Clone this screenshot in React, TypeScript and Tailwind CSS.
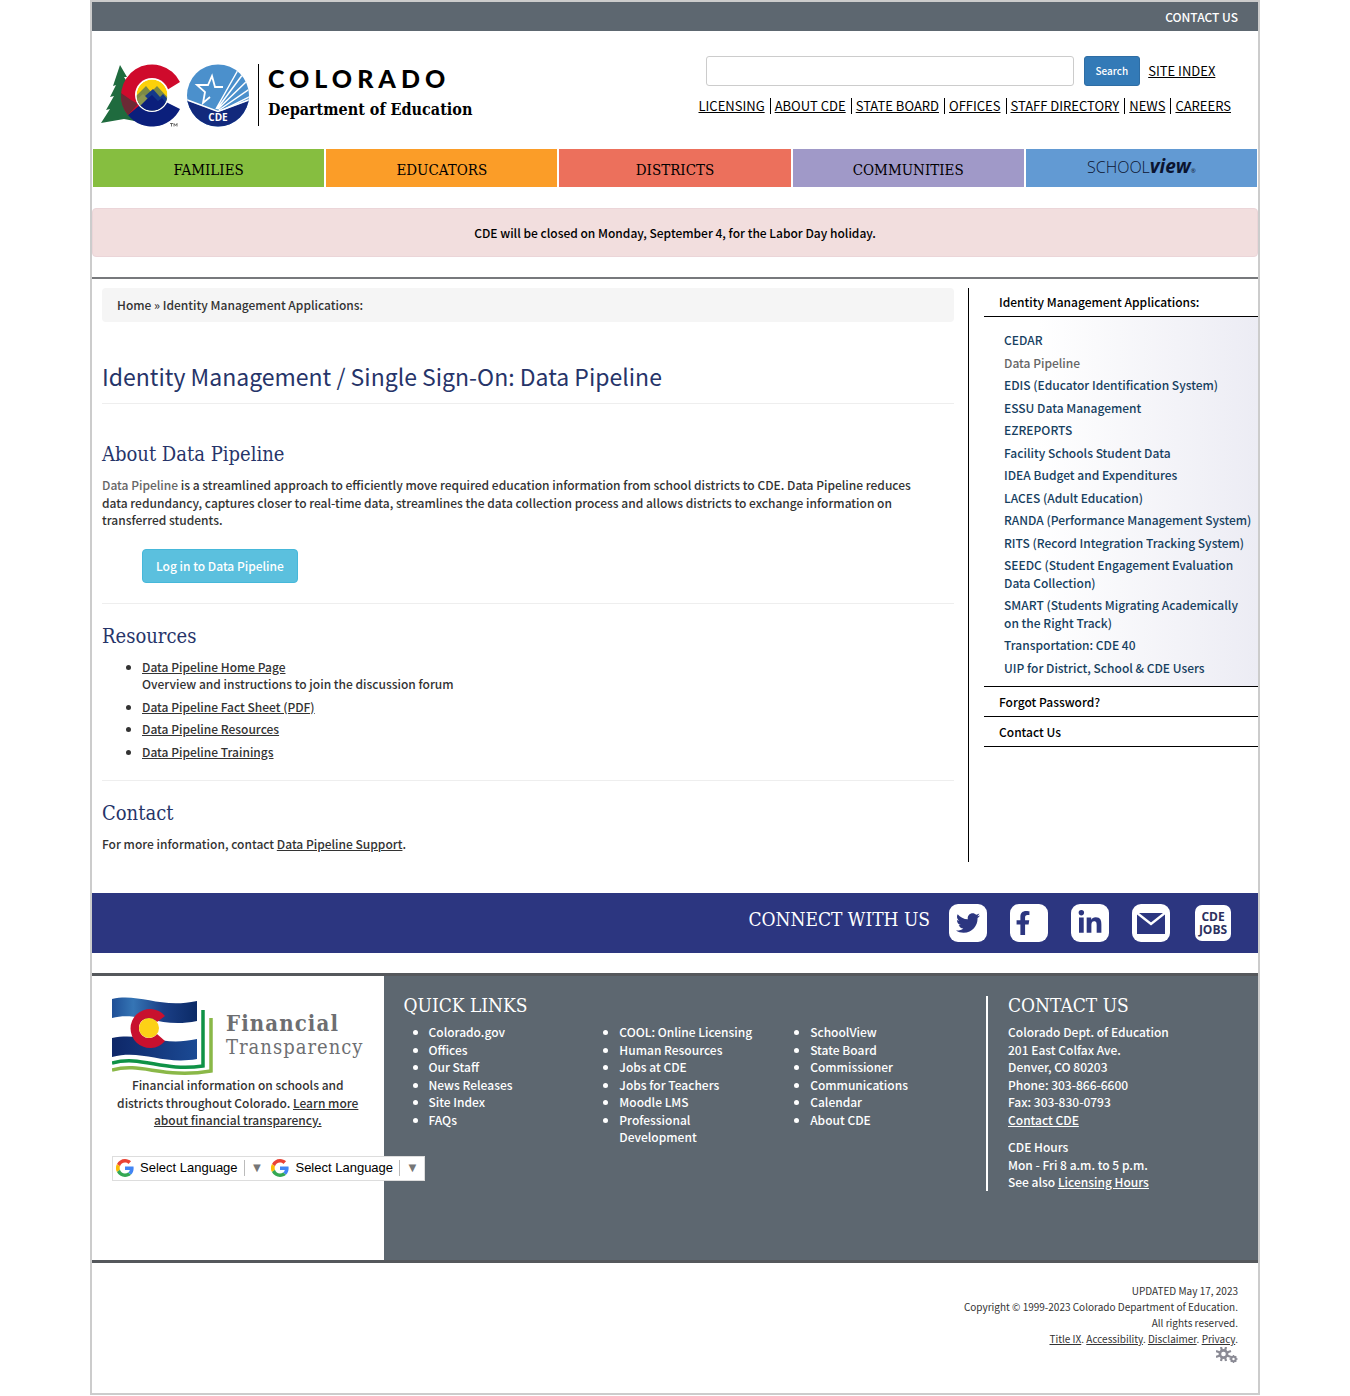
import React from "react";
import { FaFacebookF, FaLinkedinIn, FaTwitter } from "react-icons/fa";

const slab = "font-['DejaVu_Serif_Condensed','DejaVu_Serif',serif] font-normal";
const slabBold = "font-['DejaVu_Serif_Condensed','DejaVu_Serif',serif] font-bold";

const topLinks = ["LICENSING", "ABOUT CDE", "STATE BOARD", "OFFICES", "STAFF DIRECTORY", "NEWS", "CAREERS"];

const tabs = [
  { label: "FAMILIES", color: "bg-[#86be40]" },
  { label: "EDUCATORS", color: "bg-[#fb9d28]" },
  { label: "DISTRICTS", color: "bg-[#ec705c]" },
  { label: "COMMUNITIES", color: "bg-[#a099c8]" },
];

const applications = [
  "CEDAR",
  "Data Pipeline",
  "EDIS (Educator Identification System)",
  "ESSU Data Management",
  "EZREPORTS",
  "Facility Schools Student Data",
  "IDEA Budget and Expenditures",
  "LACES (Adult Education)",
  "RANDA (Performance Management System)",
  "RITS (Record Integration Tracking System)",
  "SEEDC (Student Engagement Evaluation Data Collection)",
  "SMART (Students Migrating Academically on the Right Track)",
  "Transportation: CDE 40",
  "UIP for District, School & CDE Users",
];

const quickLinks = [
  ["Colorado.gov", "Offices", "Our Staff", "News Releases", "Site Index", "FAQs"],
  ["COOL: Online Licensing", "Human Resources", "Jobs at CDE", "Jobs for Teachers", "Moodle LMS", "Professional Development"],
  ["SchoolView", "State Board", "Commissioner", "Communications", "Calendar", "About CDE"],
];

function StateLogo() {
  return (
    <svg width="150" height="66" viewBox="0 0 150 66" aria-hidden="true">
      <defs>
        <clipPath id="sealClip">
          <circle cx="118" cy="33.5" r="31" />
        </clipPath>
        <clipPath id="sunClip">
          <circle cx="52" cy="33" r="15.4" />
        </clipPath>
      </defs>
      <path d="M20 3 L27 15 L24 15 L31 26 L27 26 L35 38 L40 60 L24 57 L1 61 L10 47 L6 48 L14 34 L10 35 L16 23 L13 24 Z" fill="#1f6b3e" />
      <path d="M80 20 A31 31 0 1 0 28 53 L45 45 L67 28 Z" fill="#cf0a2c" />
      <path d="M80 47 A31 31 0 0 1 28 53 L40 43 L66 40 Z" fill="#0b1f7c" />
      <path d="M21 31 L31 38 L38 42 L28 53 Q20 44 21 31 Z" fill="#6b2a35" />
      <circle cx="52" cy="33" r="17" fill="#fff" />
      <g clipPath="url(#sunClip)">
        <circle cx="52" cy="33" r="15.4" fill="#fcd10a" />
        <path d="M34 36 L46 24 L51 30 L57 24 L70 38 V50 H34Z" fill="#7b8a45" />
        <path d="M34 44 L45 34 L53 27 L60 35 L63 32 L70 40 V50 H34Z" fill="#14398a" />
        <path d="M34 40 L43 32 L49 38 L38 50Z" fill="#8b9650" />
        <path d="M36 48 L47 37 L52 33 L58 39 L62 36 L70 46 V52 H36Z" fill="#0b1f7c" />
      </g>
      <path d="M70 61.5h3M71.5 61.5v3M74 64.5v-3l1.5 2 1.5-2v3" stroke="#333" strokeWidth=".7" fill="none" />
      <g clipPath="url(#sealClip)">
        <path d="M87 2h62v63H87Z" fill="#4b90cc" />
        <path d="M116 47 L138 8 M117 47 L143 12 M118 47 L147 19 M119 48 L151 26 M121 49 L151 34" stroke="#fff" strokeWidth="1.5" />
        <path d="M86 38 L118 50 L150 38 V66 H86Z" fill="#12297c" />
        <path d="M86 37.5 L118 49.5 L150 37.5" fill="none" stroke="#fff" strokeWidth="1.5" />
      </g>
      <path d="M123 25 H115 L112 14 L108 23 L97 23 L105 30 L103 41 L110 35" fill="none" stroke="#fff" strokeWidth="1.8" />
      <text x="118" y="59" textAnchor="middle" fontFamily="Open Sans, sans-serif" fontWeight="700" fontSize="10" fill="#fff">CDE</text>
    </svg>
  );
}

function FlagLogo() {
  return (
    <svg width="102" height="78" viewBox="0 0 102 78" aria-hidden="true">
      <defs>
        <linearGradient id="flagBlue" x1="0" x2="1">
          <stop offset="0" stopColor="#1f4f96" />
          <stop offset=".25" stopColor="#3575b5" />
          <stop offset=".6" stopColor="#1b3f86" />
          <stop offset="1" stopColor="#0b2a66" />
        </linearGradient>
        <linearGradient id="flagBlueLow" x1="0" x2="1">
          <stop offset="0" stopColor="#0e2768" />
          <stop offset="1" stopColor="#1b4a94" />
        </linearGradient>
      </defs>
      <path d="M0 2 C28 -4 48 12 85 4 V24 C48 32 28 14 0 21Z" fill="url(#flagBlue)" />
      <path d="M0 41 C30 35 50 50 85 42 V62 C50 68 30 52 0 60Z" fill="url(#flagBlueLow)" />
      <path d="M53 19 A19.5 19.5 0 1 0 53 44 L45 37 A10 10 0 1 1 45 25Z" fill="#c8102e" />
      <circle cx="37" cy="31" r="10" fill="#fcd116" />
      <path d="M0 66 C30 58 50 75 91 69 V13" fill="none" stroke="#0f9246" strokeWidth="3.5" />
      <path d="M0 73 C30 65 50 82 99 74 V21" fill="none" stroke="#8ab848" strokeWidth="3.5" />
    </svg>
  );
}

function GoogleG() {
  return (
    <svg width="18" height="18" viewBox="0 0 48 48" aria-hidden="true">
      <path fill="#EA4335" d="M24 9.5c3.5 0 6.7 1.2 9.2 3.6l6.9-6.9C35.9 2.4 30.5 0 24 0 14.6 0 6.5 5.4 2.6 13.2l8 6.2C12.4 13.7 17.7 9.5 24 9.5z" />
      <path fill="#4285F4" d="M47 24.5c0-1.6-.2-3.1-.4-4.5H24v9h12.9c-.6 3-2.2 5.5-4.7 7.2l7.7 6C44.400 38 47 31.800 47 24.500z" />
      <path fill="#FBBC05" d="M10.5 28.600A14.500 14.500 0 0 1 10.500 19.400l-8-6.200a24 24 0 0 0 0 21.600z" />
      <path fill="#34A853" d="M24 48c6.500 0 11.900-2.100 15.900-5.800l-7.700-6c-2.200 1.500-4.900 2.300-8.200 2.300-6.300 0-11.600-4.200-13.500-9.900l-8 6.200C6.500 42.600 14.600 48 24 48z" />
    </svg>
  );
}

function Gears() {
  return (
    <svg width="22" height="16" viewBox="0 0 22 16" fill="none" stroke="#8b8b95" aria-hidden="true">
      <circle cx="7.5" cy="7" r="3.6" strokeWidth="2.6" />
      <path d="M5 0l1 4M10 0l-1 4M5 14l1-4M10 14l-1-4M0 4l4 1.5M0 10l4-1.5M15 4l-4 1.5M15 10l-4-1.5" strokeWidth="2.2" />
      <circle cx="17.5" cy="12" r="2.2" strokeWidth="2" />
      <path d="M17.5 8v1.5M17.5 14.5V16M13.5 12H15M20 12h1.500M14.800 9.300l1 1M20.200 9.300l-1 1M14.800 14.700l1-1M20.200 14.700l-1-1" strokeWidth="1.5" />
    </svg>
  );
}

function TranslateButton() {
  return (
    <button type="button" className="flex h-[23px] items-center pl-[3px] font-['Liberation_Sans',Arial,sans-serif] text-[13px] font-normal text-black">
      <GoogleG />
      <span className="mx-[6px]">Select Language</span>
      <span className="border-l border-[#bbb] pl-[6px] pr-[5px] text-[13px] leading-4 text-[#767676]">▼</span>
    </button>
  );
}

function Heading({ children }: { children: React.ReactNode }) {
  return <h2 className={`${slab} text-[20px] leading-6 text-[#263469]`}>{children}</h2>;
}

function SocialLink({ label, children }: { label: string; children: React.ReactNode }) {
  return (
    <a href="#" aria-label={label} className="flex size-[38px] items-center justify-center rounded-[9px] bg-white text-[#2c3680]">
      {children}
    </a>
  );
}

export default function App() {
  return (
    <div className="mx-auto w-full max-w-[1170px] border-2 border-[#ccc] bg-white pb-[30px] font-['Noto_Sans_CJK_SC',sans-serif] text-[12px] font-medium leading-[1.46] text-[#333]">
      <div className="flex h-[29px] items-center justify-end bg-[#5d6770] pr-5">
        <a href="#" className="text-white">CONTACT US</a>
      </div>

      <header className="flex h-[118px] justify-between">
        <a href="#" className="ml-2 mt-[31px] flex h-[66px] items-center text-black">
          <StateLogo />
          <span className="ml-2 flex h-[62px] flex-col justify-center border-l border-black pl-[9px]">
            <span className="font-['Lato',sans-serif] text-[25px] font-black leading-[30px] tracking-[0.2em]">COLORADO</span>
            <span className={`${slabBold} text-[16px] leading-[34px]`}>Department of Education</span>
          </span>
        </a>
        <div className="mr-[27px] mt-[25px] flex flex-col text-[13px] font-normal text-black">
          <form className="flex items-center pl-[7px]" onSubmit={(e) => e.preventDefault()}>
            <input aria-label="Search" type="text" className="h-[30px] w-[368px] rounded-[3px] border border-[#ccc] px-2" />
            <button type="submit" className="ml-[10px] h-[30px] rounded-[3px] border border-[#2e6da4] bg-[#337ab7] px-[11px] text-[10px] font-medium text-white">Search</button>
            <a href="#" className="ml-2 underline">SITE INDEX</a>
          </form>
          <nav className="mt-[11px] flex items-center">
            {topLinks.map((link, i) => (
              <React.Fragment key={link}>
                {i > 0 && <span className="ml-[5px] mr-1 h-4 w-px bg-black" />}
                <a href="#" className="underline">{link}</a>
              </React.Fragment>
            ))}
          </nav>
        </div>
      </header>

      <nav className={`${slab} grid grid-cols-5 gap-[2px] px-px text-[15px] text-black`}>
        {tabs.map((tab) => (
          <a key={tab.label} href="#" className={`${tab.color} flex h-[38px] items-center justify-center pt-[6px]`}>{tab.label}</a>
        ))}
        <a href="#" className="flex h-[38px] items-baseline justify-center bg-[#629ad3] pt-[3px] font-['Open_Sans',sans-serif] text-[#0b1430]">
          <span className="text-[16px] font-light leading-7">SCHOOL</span>
          <span className="text-[19px] font-bold italic leading-7">view</span>
          <span className="text-[6px]">®</span>
        </a>
      </nav>

      <div role="alert" className="mt-[21px] flex h-[49px] items-center justify-center rounded-[4px] border border-[#ebd5d8] bg-[#f2dede] text-black">
        CDE will be closed on Monday, September 4, for the Labor Day holiday.
      </div>

      <div className="mt-5 grid grid-cols-[1fr_290px] border-t-2 border-[#77797c] pt-[9px]">
        <main className="pl-[10px] pr-[14px]">
          <nav className="rounded-[4px] bg-[#f5f5f5] px-[15px] py-2 leading-[18px]">
            <a href="#">Home</a> » <a href="#">Identity Management Applications:</a>
          </nav>
          <h1 className="mt-[38px] border-b border-[#eee] pb-[11px] text-[23px] font-normal leading-8 text-[#263469]">
            Identity Management / Single Sign-On: Data Pipeline
          </h1>
          <section className="mt-[38px]">
            <Heading>About Data Pipeline</Heading>
            <p className="mt-[10px] pr-6">
              <span className="text-[#666]">Data Pipeline</span> is a streamlined approach to efficiently move required education information from school districts to CDE. Data Pipeline reduces data redundancy, captures closer to real-time data, streamlines the data collection process and allows districts to exchange information on transferred students.
            </p>
            <button type="button" className="ml-10 mt-5 h-[34px] rounded-[4px] border border-[#46b8da] bg-[#5bc0de] px-[13px] text-white">
              Log in to Data Pipeline
            </button>
          </section>
          <section className="mt-5 border-t border-[#eee] pt-5">
            <Heading>Resources</Heading>
            <ul className="mt-[10px] list-disc space-y-[5px] pl-10">
              <li><a href="#" className="underline">Data Pipeline Home Page</a><br />Overview and instructions to join the discussion forum</li>
              <li><a href="#" className="underline">Data Pipeline Fact Sheet (PDF)</a></li>
              <li><a href="#" className="underline">Data Pipeline Resources</a></li>
              <li><a href="#" className="underline">Data Pipeline Trainings</a></li>
            </ul>
          </section>
          <section className="mt-5 border-t border-[#eee] pt-5">
            <Heading>Contact</Heading>
            <p className="mt-[10px]">
              For more information, contact <a href="#" className="underline">Data Pipeline Support</a>.
            </p>
          </section>
        </main>
        <aside className="min-h-[574px] border-l border-black pl-[15px] text-black">
          <a href="#" className="block border-b border-black px-[15px] py-[5px] leading-[18px]">Identity Management Applications:</a>
          <ul className="space-y-[5px] border-b border-black bg-linear-to-r from-white from-20% to-[#ececf4] pb-[10px] pl-5 pr-1 pt-[14px] text-[#16405f]">
            {applications.map((name) => (
              <li key={name}>
                <a href="#" className={name === "Data Pipeline" ? "text-[#666]" : ""}>{name}</a>
              </li>
            ))}
          </ul>
          <a href="#" className="block border-b border-black px-[15px] py-[5px] leading-[19px]">Forgot Password?</a>
          <a href="#" className="block border-b border-black px-[15px] py-[5px] leading-[19px]">Contact Us</a>
        </aside>
      </div>

      <div className="mt-[31px] flex h-[60px] items-center justify-end gap-[23px] bg-[#2c3680] pr-[27px]">
        <span className={`${slab} -mr-1 pb-2 text-[19px] leading-6 text-white`}>CONNECT WITH US</span>
        <SocialLink label="Twitter"><FaTwitter size={24} /></SocialLink>
        <SocialLink label="Facebook"><FaFacebookF size={24} className="mr-3" /></SocialLink>
        <SocialLink label="LinkedIn"><FaLinkedinIn size={26} /></SocialLink>
        <SocialLink label="Email">
          <svg width="28" height="22" viewBox="0 0 28 22" aria-hidden="true">
            <path d="M0 1H28V22H0Z" fill="#2c3680" />
            <path d="M0 1L14 12L28 1" fill="none" stroke="#fff" strokeWidth="2.5" />
          </svg>
        </SocialLink>
        <a href="#" className="ml-[2px] flex size-9 items-center justify-center rounded-[7px] bg-white text-center font-['Open_Sans',sans-serif] text-[12px] font-bold leading-[13px] text-[#2c3060]">
          CDE JOBS
        </a>
      </div>

      <footer>
        <div className="mt-5 grid min-h-[290px] grid-cols-[25%_1fr_272px] border-y-3 border-[#55585c] bg-[#5d6770] text-white">
          <div className="bg-white px-5 pt-[21px] text-[#333]">
            <a href="#" className="flex items-start text-[#6d6e71]">
              <FlagLogo />
              <span className="ml-3 mt-[14px] leading-6">
                <span className={`${slabBold} block text-[22px] tracking-wider`}>Financial</span>
                <span className={`${slab} block text-[20px] tracking-wider`}>Transparency</span>
              </span>
            </a>
            <p className="mt-px text-center">
              Financial information on schools and districts throughout Colorado. <a href="#" className="underline">Learn more about financial transparency.</a>
            </p>
            <div className="relative mt-[27px] flex w-max border border-[#ddd] bg-white">
              <TranslateButton />
              <TranslateButton />
            </div>
          </div>
          <div className="pl-5 pt-[17px]">
            <h2 className={`${slab} text-[19px] leading-6`}>QUICK LINKS</h2>
            <div className="mr-[10px] mt-[6px] grid grid-cols-3">
              {quickLinks.map((column) => (
                <ul key={column[0]} className="list-disc pl-[25px] pr-6">
                  {column.map((link) => (
                    <li key={link}><a href="#">{link}</a></li>
                  ))}
                </ul>
              ))}
            </div>
          </div>
          <div className="mt-5 self-start border-l-2 border-white pl-5">
            <h2 className={`${slab} -mt-[3px] text-[19px] leading-6`}>CONTACT US</h2>
            <address className="mt-[6px] not-italic">
              Colorado Dept. of Education<br />201 East Colfax Ave.<br />Denver, CO 80203<br />Phone: 303-866-6600<br />Fax: 303-830-0793<br />
              <a href="#" className="underline">Contact CDE</a>
            </address>
            <p className="mt-[10px]">
              CDE Hours<br />Mon - Fri 8 a.m. to 5 p.m.<br />See also <a href="#" className="underline">Licensing Hours</a>
            </p>
          </div>
        </div>
        <div className="flex flex-col items-end pr-5 pt-5 text-[10px] font-normal leading-4">
          <p>UPDATED May 17, 2023</p>
          <p>Copyright © 1999-2023 Colorado Department of Education.</p>
          <p>All rights reserved.</p>
          <p>
            <a href="#" className="underline">Title IX</a>. <a href="#" className="underline">Accessibility</a>. <a href="#" className="underline">Disclaimer</a>. <a href="#" className="underline">Privacy</a>.
          </p>
          <Gears />
        </div>
      </footer>
    </div>
  );
}
